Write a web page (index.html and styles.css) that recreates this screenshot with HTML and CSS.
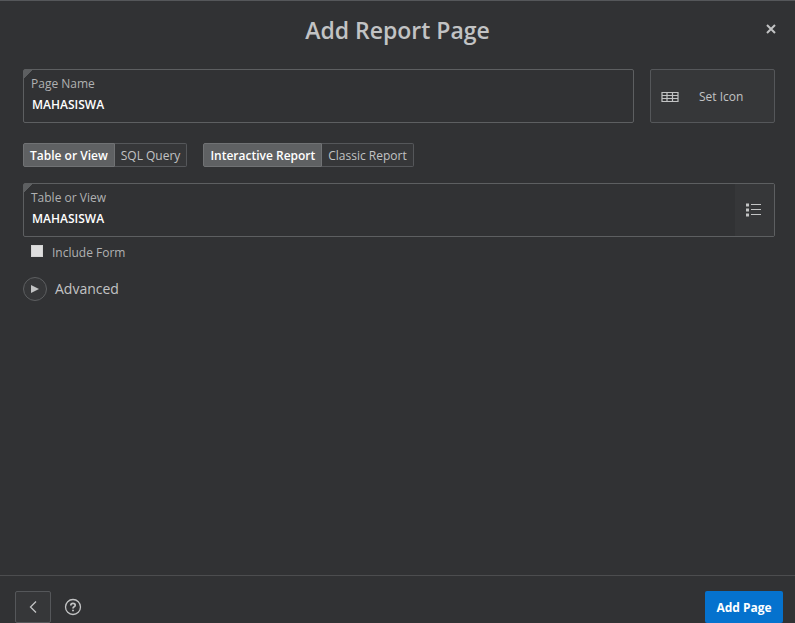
FILE: index.html
```html
<!DOCTYPE html>
<html lang="en">
<head>
<meta charset="utf-8">
<title>Add Report Page</title>
<link rel="stylesheet" href="styles.css">
</head>
<body>
<form class="dialog">
  <header class="header">
    <h1 class="title">Add Report Page</h1>
    <button class="close" type="button" aria-label="Close">
      <svg width="10" height="10" viewBox="0 0 10 10"><path d="M1 1l8 8M9 1l-8 8" fill="none" stroke="currentColor" stroke-width="2"/></svg>
    </button>
  </header>
  <main class="content">
    <div class="row">
      <div class="field required">
        <div class="field-body">
          <label class="label" for="page-name">Page Name</label>
          <input class="input" id="page-name" type="text" value="MAHASISWA">
        </div>
      </div>
      <button class="set-icon" type="button">
        <svg width="18" height="12" viewBox="0 0 18 12"><path d="M0.500 1.500h17M0.500 4.500h17M0.500 7.500h17M0.500 10.500h17M1 1v10M6 1v10M11.500 1v10M17 1v10" fill="none" stroke="currentColor" stroke-width="1.200"/></svg>
        <span>Set Icon</span>
      </button>
    </div>
    <div class="row switches">
      <div class="segments" role="group" aria-label="Source type">
        <button class="segment selected" type="button" aria-pressed="true">Table or View</button>
        <button class="segment" type="button" aria-pressed="false">SQL Query</button>
      </div>
      <div class="segments" role="group" aria-label="Report type">
        <button class="segment selected" type="button" aria-pressed="true">Interactive Report</button>
        <button class="segment" type="button" aria-pressed="false">Classic Report</button>
      </div>
    </div>
    <div class="field required">
      <div class="field-body">
        <label class="label" for="table-name">Table or View</label>
        <input class="input" id="table-name" type="text" value="MAHASISWA">
      </div>
      <button class="picker" type="button" aria-label="Choose table or view">
        <svg width="16" height="14" viewBox="0 0 16 14"><path d="M1 2h3M1 7h3M1 12h3" fill="none" stroke="currentColor" stroke-width="3"/><path d="M6 1.500h10M6 6.500h10M6 11.500h10" fill="none" stroke="currentColor"/></svg>
      </button>
    </div>
    <div class="check">
      <input class="checkbox" id="include-form" type="checkbox">
      <label for="include-form">Include Form</label>
    </div>
    <button class="advanced" type="button" aria-expanded="false">
      <span class="disclosure"><svg width="8" height="8" viewBox="0 0 8 8"><path d="M0 0l8 4l-8 4z" fill="currentColor"/></svg></span>
      Advanced
    </button>
  </main>
  <footer class="footer">
    <button class="back" type="button" aria-label="Back">
      <svg width="8" height="12" viewBox="0 0 8 12"><path d="M7 0.500l-5.500 5.500l5.500 5.500" fill="none" stroke="currentColor" stroke-width="1.300"/></svg>
    </button>
    <button class="help" type="button" aria-label="Help">
      <svg width="18" height="18" viewBox="0 0 18 18" fill="none" stroke="currentColor"><circle cx="9" cy="9" r="7.500" stroke-width="1.300"/><path d="M6.800 7.500q0-2.200 2.200-2.200t2.200 1.900q0 1-1.100 1.600q-1.100.6-1.100 1.700" stroke-width="1.700"/><path d="M9 11.700v1.600" stroke-width="1.800"/></svg>
    </button>
    <button class="submit" type="submit">Add Page</button>
  </footer>
</form>
</body>
</html>
```
FILE: styles.css
```css
* {
  box-sizing: border-box;
}

body {
  margin: 0;
  background: #313234;
  color: #c2c3c4;
  font: 12px/16px "Open Sans", "Noto Sans", sans-serif;
}

button {
  margin: 0;
  padding: 0;
  border: 0;
  background: none;
  color: inherit;
  font: inherit;
}

svg {
  display: block;
  flex: none;
}

.dialog {
  display: flex;
  flex-direction: column;
  min-height: 100vh;
  border-top: 1px solid #55575a;
}

.header {
  display: grid;
  grid-template-columns: 1fr auto 1fr;
  align-items: center;
  height: 56px;
  padding: 0 19px;
}

.title {
  grid-column: 2;
  margin: 0;
  padding-top: 2px;
  font-size: 23px;
  line-height: 32px;
  font-weight: 600;
}

.close {
  justify-self: end;
}

.content {
  flex: 1;
  padding: 12px 20px 16px 23px;
}

.row {
  display: flex;
  gap: 16px;
}

.field {
  display: flex;
  flex: 1;
  min-height: 54px;
  border: 1px solid #5d5f61;
  border-radius: 2px;
}

.required {
  background: linear-gradient(135deg, #5d5f61 6px, transparent 6px);
}

.field-body {
  flex: 1;
  padding: 6px 7px;
}

.label {
  display: block;
  color: #b0b1b2;
}

.input {
  display: block;
  width: 100%;
  height: 24px;
  padding: 0 1px;
  border: 0;
  outline: 0;
  background: none;
  color: #fff;
  font: inherit;
  font-weight: 600;
}

.set-icon {
  display: flex;
  align-items: center;
  gap: 20px;
  width: 125px;
  padding: 1px 10px 0;
  border: 1px solid #55575a;
  border-radius: 2px;
  background: #363739;
}

.switches {
  margin: 20px 0 16px;
}

.segments {
  display: flex;
}

.segment {
  height: 24px;
  padding: 1px 6px 0;
  border: 1px solid #55575a;
  border-radius: 0 2px 2px 0;
  background: #363739;
}

.segment + .segment {
  border-left: 0;
}

.selected {
  border-color: #707274;
  border-radius: 2px 0 0 2px;
  background: #5f6163;
  color: #fff;
  font-weight: 600;
}

.picker {
  display: flex;
  align-items: center;
  justify-content: center;
  width: 39px;
  padding-right: 3px;
  background: #363739;
}

.check {
  display: flex;
  gap: 9px;
  padding: 8px 8px 0;
  color: #b0b1b2;
}

.checkbox {
  appearance: none;
  width: 12px;
  height: 12px;
  margin: 0;
  border: 1px solid #d4d4d4;
  background: #dedede;
}

.advanced {
  display: flex;
  align-items: center;
  gap: 8px;
  margin-top: 16px;
  font-size: 14px;
}

.disclosure {
  display: flex;
  align-items: center;
  justify-content: center;
  width: 24px;
  height: 24px;
  border: 1px solid #5d5f61;
  border-radius: 50%;
  background: #363739;
}

.footer {
  display: flex;
  align-items: center;
  gap: 13px;
  padding: 15px 12px 0 15px;
  border-top: 1px solid #4c4d4f;
}

.back {
  display: flex;
  align-items: center;
  justify-content: center;
  width: 36px;
  height: 32px;
  border: 1px solid #55575a;
  border-radius: 2px;
  background: #363739;
}

.submit {
  height: 32px;
  min-width: 78px;
  margin-left: auto;
  padding: 1px 8px 0;
  border-radius: 2px;
  background: #0572ce;
  color: #fff;
  font-weight: 700;
}
```
